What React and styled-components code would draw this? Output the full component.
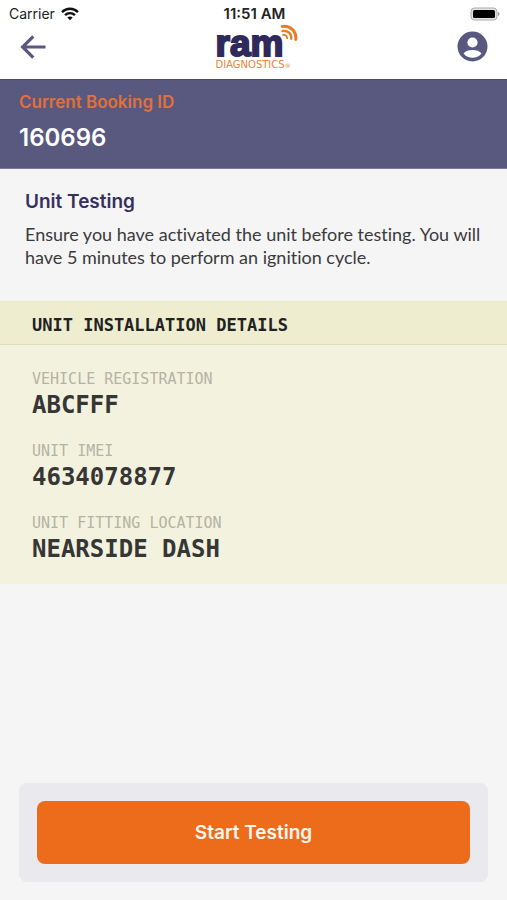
import React from "react";
import styled, { createGlobalStyle } from "styled-components";

const GlobalStyle = createGlobalStyle`
  *, *::before, *::after { box-sizing: border-box; }
  body {
    margin: 0;
    background: #f5f5f5;
    color: #3a3a3c;
    font-family: "Inter", "Liberation Sans", sans-serif;
  }
  h1, h2, p, dl, dt, dd { margin: 0; }
`;

const Screen = styled.div`
  display: flex;
  flex-direction: column;
  min-height: 100vh;
`;

const StatusBar = styled.div`
  display: grid;
  grid-template-columns: 1fr auto 1fr;
  align-items: center;
  height: 28px;
  padding: 0 7px 0 9px;
  background: #fff;
  color: #222;
  font-size: 14px;
  line-height: 20px;
`;

const Carrier = styled.span`
  display: flex;
  align-items: center;
  gap: 6px;
`;

const Clock = styled.time`
  font-size: 15px;
  font-weight: 600;
`;

const Battery = styled.svg`
  justify-self: end;
`;

const TopBar = styled.header`
  display: grid;
  grid-template-columns: 1fr auto 1fr;
  align-items: start;
  height: 51px;
  padding: 0 19px;
  background: #fff;
`;

const IconButton = styled.button`
  display: flex;
  justify-self: ${({ $end }) => ($end ? "end" : "start")};
  padding: ${({ $end }) => ($end ? "3px 0" : "4px 0")};
  border: 0;
  background: none;
  color: #59587f;
  cursor: pointer;
`;

const Logo = styled.div`
  position: relative;
  display: flex;
  flex-direction: column;
  align-items: flex-start;
  width: 88px;
  padding-left: 6px;
`;

const LogoName = styled.span`
  color: #2f2a5b;
  font: 700 37px/32px "Liberation Sans", sans-serif;
  -webkit-text-stroke: 2px #2f2a5b;
`;

const LogoTag = styled.span`
  color: #ee8230;
  font: 400 10px/10px "DejaVu Sans", sans-serif;
  white-space: nowrap;

  small {
    font-size: 6px;
  }
`;

const LogoWaves = styled.svg`
  position: absolute;
  top: -4px;
  right: 0;
`;

const Booking = styled.section`
  height: 90px;
  padding: 11px 19px;
  border-top: 1px solid #4c4b78;
  border-bottom: 1px solid #7b7a99;
  background: #59587f;
`;

const BookingLabel = styled.p`
  color: #e2703a;
  font-size: 17px;
  font-weight: 600;
  line-height: 22px;
`;

const BookingId = styled.p`
  padding-top: 8px;
  color: #fff;
  font-size: 24px;
  font-weight: 600;
  line-height: 34px;
`;

const Intro = styled.section`
  padding: 20px 12px 32px 25px;
`;

const IntroTitle = styled.h1`
  color: #36315f;
  font-size: 19px;
  font-weight: 600;
  line-height: 26px;
`;

const IntroText = styled.p`
  padding-top: 8px;
  font-family: "Lato", "Liberation Sans", sans-serif;
  font-size: 18px;
  font-variant-ligatures: none;
  line-height: 23px;
`;

const Details = styled.section`
  background: #f3f2de;
  font-family: "DejaVu Sans Mono", monospace;
`;

const DetailsTitle = styled.h2`
  padding: 13px 32px 9px;
  border-top: 1px solid #ebeacb;
  border-bottom: 1px solid #dfdec0;
  background: #eeedcf;
  color: #222;
  font-size: 17px;
  font-weight: 700;
  line-height: 20px;
`;

const DetailsList = styled.dl`
  display: flex;
  flex-direction: column;
  gap: 20px;
  padding: 24px 32px 19px;
`;

const DetailLabel = styled.dt`
  color: #b4b3a5;
  font-size: 15px;
  line-height: 20px;
`;

const DetailValue = styled.dd`
  color: #363635;
  font-size: 24px;
  font-weight: 700;
  line-height: 32px;
`;

const ActionPanel = styled.footer`
  margin: auto 19px 18px;
  padding: 18px;
  border-radius: 8px;
  background: #eaeaee;
`;

const PrimaryButton = styled.button`
  width: 100%;
  padding: 18px;
  border: 0;
  border-radius: 8px;
  background: #ec6c1c;
  color: #fff8f0;
  font: 600 19px/27px "Inter", sans-serif;
  cursor: pointer;
`;

const details = [
  ["VEHICLE REGISTRATION", "ABCFFF"],
  ["UNIT IMEI", "4634078877"],
  ["UNIT FITTING LOCATION", "NEARSIDE DASH"],
];

export default function App() {
  return (
    <Screen>
      <GlobalStyle />
      <StatusBar>
        <Carrier>
          Carrier
          <svg width="18" height="14" viewBox="0 0 18 14" fill="none" stroke="#111" strokeWidth="2.5" aria-hidden="true">
            <path d="M1 5.1C5.6.7 12.4.7 17 5.1" />
            <path d="M4 8.2C6.9 5.5 11.1 5.5 14 8.2" />
            <path d="M6.3 10.5C7.9 9 10.1 9 11.7 10.5L9 13.3Z" fill="#111" stroke="none" />
          </svg>
        </Carrier>
        <Clock>11:51 AM</Clock>
        <Battery width="30" height="14" viewBox="0 0 30 14" aria-hidden="true">
          <rect x="1" y="1" width="26" height="12" rx="3.5" fill="#e4e4e4" stroke="#aaa" />
          <rect x="3" y="3" width="22" height="8" rx="1.5" fill="#000" />
          <path d="M28 5c2 .7 2 3.3 0 4Z" fill="#999" />
        </Battery>
      </StatusBar>
      <TopBar>
        <IconButton aria-label="Back">
          <svg width="28" height="30" viewBox="0 0 28 30" fill="none" stroke="currentColor" strokeWidth="3.2">
            <path d="M26.5 15H4M14.3 4.3 3.6 15l10.7 10.7" />
          </svg>
        </IconButton>
        <Logo>
          <LogoName>ram</LogoName>
          <LogoTag>DIAGNOSTICS<small>®</small></LogoTag>
          <LogoWaves width="18" height="20" viewBox="0 0 18 20" fill="none" stroke="#e87b27" strokeLinecap="round" aria-hidden="true">
            <path d="M2.2 2.4C10.5 1.2 16.5 7 15.8 15.5" strokeWidth="3" />
            <path d="M2.5 7C8 6.3 11.6 9.7 11.3 14.8" strokeWidth="2.3" />
            <path d="M3 11C5.5 10.7 7.2 12 7.2 14.3" strokeWidth="1.8" />
          </LogoWaves>
        </Logo>
        <IconButton $end aria-label="Account">
          <svg width="31" height="31" viewBox="0 0 31 31">
            <circle cx="15.5" cy="15.5" r="15" fill="currentColor" />
            <circle cx="15.5" cy="11.5" r="5.1" fill="#fff" />
            <path d="M6.5 22.5C9.5 17.9 21.5 17.9 24.5 22.5C20 28.3 11 28.3 6.5 22.5Z" fill="#fff" />
          </svg>
        </IconButton>
      </TopBar>
      <Booking>
        <BookingLabel>Current Booking ID</BookingLabel>
        <BookingId>160696</BookingId>
      </Booking>
      <Intro>
        <IntroTitle>Unit Testing</IntroTitle>
        <IntroText>
          Ensure you have activated the unit before testing. You will have 5 minutes to perform an ignition cycle.
        </IntroText>
      </Intro>
      <Details>
        <DetailsTitle>UNIT INSTALLATION DETAILS</DetailsTitle>
        <DetailsList>
          {details.map(([label, value]) => (
            <div key={label}>
              <DetailLabel>{label}</DetailLabel>
              <DetailValue>{value}</DetailValue>
            </div>
          ))}
        </DetailsList>
      </Details>
      <ActionPanel>
        <PrimaryButton>Start Testing</PrimaryButton>
      </ActionPanel>
    </Screen>
  );
}
